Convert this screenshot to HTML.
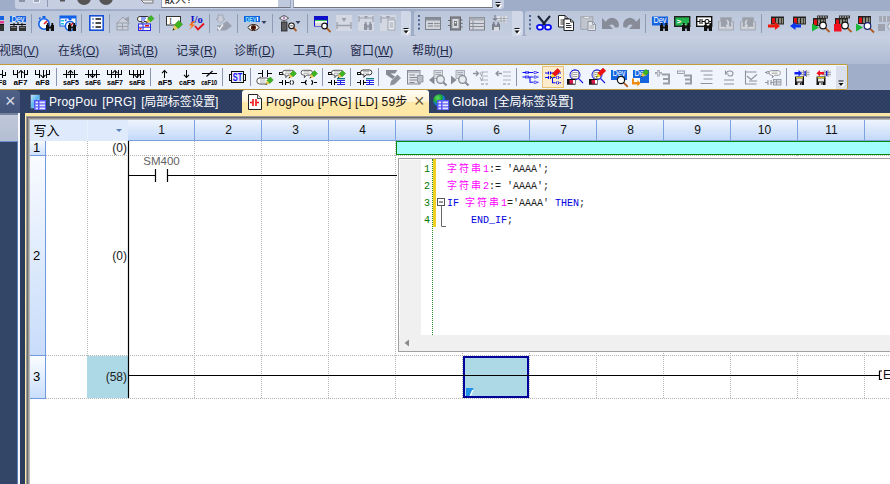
<!DOCTYPE html><html><head><meta charset="utf-8"><title>ProgPou [PRG] [LD] 59步</title><style>
*{box-sizing:border-box;margin:0;padding:0}
html,body{width:890px;height:484px;overflow:hidden;background:#fff}
body{position:relative;font-family:"Liberation Sans","Noto Sans CJK SC",sans-serif;font-size:12px;color:#1e1e1e}
.abs{position:absolute}
#top{position:absolute;left:0;top:0;width:890px;height:90px;background:#a0adc8}
.panel{position:absolute;background:linear-gradient(#bbc6db,#c4cee1);border-radius:3px}
.menu{position:absolute;left:0;top:36px;width:890px;height:28px;background:linear-gradient(#c8d1e3,#afbbd4)}
.menu span{position:absolute;top:5px;font-size:12px;color:#1e2a4c;white-space:nowrap;letter-spacing:0}
.menu u{text-decoration:underline;text-underline-offset:1px}
.sep{position:absolute;width:1px;background:#8d99b3}
.sep2{position:absolute;width:1px;background:#9aa3b5}
#ltb{position:absolute;left:-3px;top:64px;width:851px;height:26px;background:#f0f4fc;border:1px solid #c09c38;border-radius:2px}
#tabs{position:absolute;left:0;top:90px;width:890px;height:26px;background-color:#2c3d5f;background-image:radial-gradient(circle,#31436a .7px,transparent .9px),radial-gradient(circle,#31436a .7px,transparent .9px);background-size:4px 4px;background-position:0 0,2px 2px}
.tab{position:absolute;top:0;height:23px;font-size:12px;letter-spacing:.22px;color:#fff;white-space:nowrap}
.tab span{position:absolute;top:2px;word-spacing:1.5px}.tab span i{font-style:normal;letter-spacing:-.2px}
#main{position:absolute;left:0;top:113px;width:890px;height:371px;background:#2b3c5d}
svg{position:absolute;overflow:visible}
.hdr{position:absolute;top:120px;height:21px;font-size:12px;text-align:center;line-height:21px;color:#111}
.code{position:absolute;font-family:"Liberation Mono","Noto Sans CJK SC",monospace;font-size:10px;line-height:17px;height:17px;white-space:pre;letter-spacing:0}
</style></head><body>
<div id="top">
<div class="panel" style="left:15px;top:-4px;width:489px;height:13px;background:#c6cfe1"></div>
<div class="abs" style="left:161px;top:-2px;width:130px;height:10px;background:#fff;border:1px solid #9aa7c0;border-bottom-color:#70757f"></div>
<div class="abs" style="left:278px;top:-2px;width:12px;height:9px;background:#c3cde2"></div>
<div class="abs" style="left:293px;top:-2px;width:200px;height:10px;background:#fff;border:1px solid #9aa7c0;border-bottom-color:#70757f"></div>
<div class="abs" style="left:164px;top:-10px;font-size:11px;color:#222;height:16px;overflow:hidden">嵌入?</div>
<svg style="left:0px;top:0px" width="890" height="484" viewBox="0 0 890 484"><rect x="19" y="0" width="6" height="2" fill="#8a93a8" /><rect x="33" y="0" width="7" height="3" fill="#e8ecf4" /><rect x="34" y="0" width="5" height="2" fill="#9aa4b8" /><path d="M47.5 0V7" fill="none" stroke="#8e9bb5" stroke-width="1" /><rect x="60" y="0" width="5" height="1.5" fill="#555" /><circle cx="84" cy="-2" r="7" fill="#555"/><circle cx="106" cy="-2" r="7" fill="#555"/><path d="M141 0l3 3h9v-3z" fill="#e8ecf2" stroke="#777" stroke-width="1" /><rect x="279" y="-2" width="11" height="9" fill="#bfcadf" /><path d="M496.5 3.5h5M496.5 5.5h5l-2.5 3z" fill="#fff" stroke="#fff" stroke-width="1" /><path d="M495.5 2.5h5" fill="none" stroke="#111" stroke-width="1" /><path d="M495.5 4.5h5l-2.5 3z" fill="#111" /></svg>
<div class="panel" style="left:-4px;top:11px;width:415px;height:25px"></div>
<div class="panel" style="left:414px;top:11px;width:109px;height:25px"></div>
<div class="panel" style="left:525px;top:11px;width:380px;height:25px"></div>
<div class="abs" style="left:401px;top:11px;width:10px;height:25px;background:#d0d8e8;border-radius:0 3px 3px 0"></div>
<div class="abs" style="left:512px;top:11px;width:11px;height:25px;background:#d0d8e8;border-radius:0 3px 3px 0"></div>
<svg style="left:0px;top:0px" width="890" height="484" viewBox="0 0 890 484"><g transform="translate(-8 15)"><rect x="0" y="1" width="12" height="4" fill="#1464e0" /><rect x="0" y="6" width="12" height="2.5" fill="#e83a8a" /><rect x="2" y="10" width="10" height="6" fill="#333" /><path d="M0 9.5h12" fill="none" stroke="#111" stroke-width="1" /></g><g transform="translate(10 15)"><rect x="0" y="1" width="16" height="6" fill="#1464e0" /><text x="8.0" y="7" font-size="8.5" fill="#fff" font-family="Liberation Sans,sans-serif" text-anchor="middle" textLength="13" lengthAdjust="spacingAndGlyphs">Dev</text><path d="M0 9.5h16M4 8v3M12 8v3M8 7v2.5" fill="none" stroke="#111" stroke-width="1" /><rect x="0" y="11" width="7" height="5" fill="#333" /><rect x="9" y="11" width="7" height="5" fill="#333" /><rect x="1" y="12" width="5" height="1" fill="#777" /><rect x="10" y="12" width="5" height="1" fill="#777" /></g><path d="M31.5 14V33" fill="none" stroke="#8e9bb5" stroke-width="1" /><g transform="translate(38 15)"><circle cx="6" cy="9" r="5.2" fill="#fff" stroke="#1060e8" stroke-width="1.6"/><rect x="4.5" y="1" width="3" height="2" fill="#1060e8" /><path d="M1 4l1.5-1.5" fill="none" stroke="#1060e8" stroke-width="1.5" /><path d="M6 9l3-3" fill="none" stroke="#e81010" stroke-width="1.5" /><g transform="translate(8 8)"><rect x="0" y="2" width="3.2" height="6" fill="#111" /><rect x="4.8" y="2" width="3.2" height="6" fill="#111" /><rect x="0.8" y="0" width="1.8" height="3" fill="#111" /><rect x="5.4" y="0" width="1.8" height="3" fill="#111" /><rect x="3" y="3.5" width="2" height="2" fill="#111" /></g></g><g transform="translate(60 15)"><rect x="0" y="1" width="16" height="10" fill="#fff" stroke="#1060e8" stroke-width="1"/><rect x="0" y="1" width="16" height="2.5" fill="#1060e8" /><rect x="1" y="5" width="3" height="1.5" fill="#18c0e0" /><rect x="1" y="8" width="3" height="1.5" fill="#18c0e0" /><g transform="translate(4 2)"><circle cx="6" cy="9" r="4.6" fill="#fff" stroke="#1060e8" stroke-width="1.6"/><rect x="4.5" y="1" width="3" height="2" fill="#1060e8" /><path d="M1 4l1.5-1.5" fill="none" stroke="#1060e8" stroke-width="1.5" /><path d="M6 9l3-3" fill="none" stroke="#e81010" stroke-width="1.5" /></g><g transform="translate(8 8)"><rect x="0" y="2" width="3.2" height="6" fill="#111" /><rect x="4.8" y="2" width="3.2" height="6" fill="#111" /><rect x="0.8" y="0" width="1.8" height="3" fill="#111" /><rect x="5.4" y="0" width="1.8" height="3" fill="#111" /><rect x="3" y="3.5" width="2" height="2" fill="#111" /></g></g><path d="M81.5 14V33" fill="none" stroke="#8e9bb5" stroke-width="1" /><g transform="translate(89 15)"><rect x="0.8" y="0.8" width="13.4" height="14.4" fill="#fff" stroke="#1450d8" stroke-width="1.6"/><rect x="3" y="3" width="2" height="2" fill="#8aa0d0" /><rect x="3" y="7" width="2" height="2" fill="#8aa0d0" /><rect x="3" y="11" width="2" height="2" fill="#8aa0d0" /><path d="M6.5 4h5.5M6.5 8h5.5M6.5 12h5.5" fill="none" stroke="#111" stroke-width="1.4" /></g><path d="M109.5 14V33" fill="none" stroke="#8e9bb5" stroke-width="1" /><g transform="translate(116 15)"><path d="M1 8l6-6 6 5v2H1z" fill="#c9ced9" stroke="#9aa0ad" stroke-width="1" /><path d="M8 4l5-2.5v6z" fill="#9aa0ad" /><rect x="1" y="8" width="11" height="7" fill="#c9ced9" stroke="#9aa0ad" stroke-width="1"/><path d="M1 11.5h11M6.5 8v7" fill="none" stroke="#9aa0ad" stroke-width="1" /></g><g transform="translate(138 15)"><path d="M2 1.5h7a2 2 0 0 1 0 5H6L4 8.5V6.5H2a2 2 0 0 1 0-5z" fill="#fff" stroke="#333" stroke-width="1" /><path d="M3 3h5M3 5h4" fill="none" stroke="#2040e0" stroke-width="1" /><g transform="translate(8 0.5)"><path d="M5 0l3 3-3.5 3.5-3-3z" fill="#3cb521" stroke="#2a8a10" stroke-width="0.5" /><path d="M1.5 3.5l3 3L0 8z" fill="#e8c850" /><path d="M0 8l.7-1.8 1.1 1.1z" fill="#222" /></g><rect x="0.5" y="9" width="12" height="6.5" fill="#fff" stroke="#2828e8" stroke-width="1"/><path d="M.5 12.2h12M5 9v6.5" fill="none" stroke="#2828e8" stroke-width="1" /><rect x="7" y="10" width="4" height="1.5" fill="#e01010" /><rect x="1.5" y="13" width="2" height="1.5" fill="#e01010" /></g><path d="M159.5 14V33" fill="none" stroke="#8e9bb5" stroke-width="1" /><g transform="translate(166 15)"><rect x="0.5" y="1.5" width="14" height="8.5" fill="#fff" stroke="#333" stroke-width="1"/><text x="4.6" y="8.6" font-size="8" fill="#333" font-family="Liberation Serif,serif" text-anchor="middle">I</text><g transform="translate(6.5 5.5) scale(1.25)"><path d="M5 0l3 3-3.5 3.5-3-3z" fill="#3cb521" stroke="#2a8a10" stroke-width="0.5" /><path d="M1.5 3.5l3 3L0 8z" fill="#e8c850" /><path d="M0 8l.7-1.8 1.1 1.1z" fill="#222" /></g></g><g transform="translate(188 15)"><text x="2.5" y="7.5" font-size="10.5" fill="#1010c8" font-family="Liberation Serif,serif" font-weight="bold">I/o</text><path d="M5 6L1 10.5h3L1 15l6-5.5H4l3-3.5z" fill="#ff6a00" /><path d="M7 11l3 3.5 6-6" fill="none" stroke="#e01020" stroke-width="1.8" /></g><path d="M209.5 14V33" fill="none" stroke="#8e9bb5" stroke-width="1" /><g transform="translate(215 15)"><path d="M3 0h5v4h2L5.5 8 1 4h2z" fill="#c9ced9" stroke="#9aa0ad" stroke-width="0.8" /><path d="M6 10l6-4 5 5-6 4.5H2v-5z" fill="#9aa0ad" /><path d="M2.5 12l2 2.5 3.5-5" fill="none" stroke="#eef0f4" stroke-width="1.5" /></g><path d="M237.5 14V33" fill="none" stroke="#8e9bb5" stroke-width="1" /><g transform="translate(244 15)"><rect x="0" y="1" width="16" height="6" fill="#1464e0" /><text x="7" y="6.6" font-size="6.5" fill="#8fe8ff" font-family="Liberation Sans,sans-serif" text-anchor="middle" font-weight="bold" textLength="11" lengthAdjust="spacingAndGlyphs">DEV</text><rect x="13" y="2" width="1.2" height="4" fill="#fff" /><path d="M4 12.5c2-4 9-4 11 0c-2 4-9 4-11 0z" fill="#fff" stroke="#2a1a10" stroke-width="1" /><circle cx="9.5" cy="12.5" r="2.6" fill="#5a1a08"/><circle cx="9.5" cy="12.5" r="1" fill="#111"/></g><path d="M261.5 21h5l-2.5 3z" fill="#33415e" /><path d="M272.5 14V33" fill="none" stroke="#8e9bb5" stroke-width="1" /><g transform="translate(279 15)"><path d="M5 0v6.5M0 3.2h10" fill="none" stroke="#444" stroke-width="0.8" /><ellipse cx="5" cy="3.2" rx="3.6" ry="2.3" fill="#e8e8ee" stroke="#444" stroke-width=".8"/><rect x="4" y="2.2" width="2" height="2" fill="#a020a0" opacity=".55"/><rect x="2.5" y="7" width="5.5" height="9" fill="#5c5c60" stroke="#222" stroke-width=".8"/><path d="M14.5 13l3 3" fill="none" stroke="#b05a20" stroke-width="1.8" /><circle cx="12.5" cy="10.8" r="2.8" fill="#fff" stroke="#111" stroke-width="1.1"/><path d="M11.2 10.8h2.6" fill="none" stroke="#333" stroke-width="0.8" /></g><path d="M295.5 21h5l-2.5 3z" fill="#33415e" /><path d="M307.5 14V33" fill="none" stroke="#8e9bb5" stroke-width="1" /><g transform="translate(314 15)"><rect x="0" y="1" width="14" height="10.5" fill="#1010c8" /><rect x="1" y="5" width="12" height="6" fill="#d8d8d8" /><rect x="1" y="5" width="12" height="1.2" fill="#38c050" /><rect x="1" y="6.2" width="12" height="1.5" fill="#fff" /><path d="M12.459999999999999 12.959999999999999L16.5 17.0" fill="none" stroke="#b05a20" stroke-width="1.8" /><circle cx="10.5" cy="11" r="2.8" fill="#fff" stroke="#111" stroke-width="1.2"/></g><g transform="translate(336 15)"><rect x="0" y="0" width="16" height="16" fill="#d3d8e3" /><path d="M1 7v7M15 7v7M1 10.5h14" fill="none" stroke="#9aa0ad" stroke-width="1.3" /><path d="M5.5 3h5l-2.5 4z" fill="#9aa0ad" /></g><g transform="translate(358 15)"><rect x="0" y="0" width="16" height="16" fill="#d3d8e3" /><path d="M1 1v6M15 1v6M1 3h14" fill="none" stroke="#9aa0ad" stroke-width="1.2" /><path d="M6 1h4l-2 3z" fill="#9aa0ad" /><g transform="translate(6 7)"><rect x="0" y="2" width="3.2" height="6" fill="#8e94a2" /><rect x="4.8" y="2" width="3.2" height="6" fill="#8e94a2" /><rect x="0.8" y="0" width="1.8" height="3" fill="#8e94a2" /><rect x="5.4" y="0" width="1.8" height="3" fill="#8e94a2" /><rect x="3" y="3.5" width="2" height="2" fill="#8e94a2" /></g></g><g transform="translate(380 15)"><rect x="0" y="0" width="16" height="16" fill="#d3d8e3" /><path d="M1 1v7M1 3h14" fill="none" stroke="#9aa0ad" stroke-width="1.2" /><path d="M6 1h4l-2 3z" fill="#9aa0ad" /><rect x="8" y="5" width="7" height="10" fill="#eceff4" stroke="#9aa0ad" stroke-width="1"/><path d="M9.5 8h4M9.5 10h4M9.5 12h4" fill="none" stroke="#9aa0ad" stroke-width="1" /></g><path d="M404.5 29.5h5M404.5 31.5h5l-2.5 3z" fill="#fff" stroke="#fff" stroke-width="1" /><path d="M403.5 28.5h5" fill="none" stroke="#111" stroke-width="1" /><path d="M403.5 30.5h5l-2.5 3z" fill="#111" /><rect x="418" y="15.0" width="2" height="2" fill="#4a6494" /><rect x="418" y="19.2" width="2" height="2" fill="#4a6494" /><rect x="418" y="23.4" width="2" height="2" fill="#4a6494" /><rect x="418" y="27.6" width="2" height="2" fill="#4a6494" /><g transform="translate(425 15)"><rect x="0.5" y="2.5" width="15" height="12" fill="#cfd3da" stroke="#7d818b" stroke-width="1"/><rect x="0.5" y="2.5" width="15" height="3" fill="#8a8e98" /><path d="M3 8.5h5M3 11h5" fill="none" stroke="#7d818b" stroke-width="1.2" /><path d="M9.5 8.5h5M9.5 11h5" fill="none" stroke="#666" stroke-width="1.2" stroke-dasharray="1.2 .8"/></g><g transform="translate(447 15)"><rect x="3.5" y="2" width="10" height="13" fill="#8a8e98" stroke="#666" stroke-width="1"/><rect x="5.5" y="4" width="6" height="9" fill="#d8dbe2" /><rect x="7" y="6" width="3" height="5" fill="#777" /><rect x="7.8" y="7" width="1.4" height="1.4" fill="#eee" /><path d="M1 5.5h2.5M1 10.5h2.5M13.5 5h2M13.5 8.5h2M13.5 12h2" fill="none" stroke="#666" stroke-width="1" /></g><g transform="translate(469 15)"><rect x="0.5" y="2.5" width="15" height="12.5" fill="#d4d7de" stroke="#7d818b" stroke-width="1"/><rect x="0.5" y="2.5" width="15" height="3" fill="#a9adb6" /><path d="M.5 8.5h15M.5 11.5h15M4 5.5v9.5" fill="none" stroke="#8a8e98" stroke-width="1" /></g><g transform="translate(491 15)"><rect x="6" y="1" width="10" height="7" fill="#dde0e6" /><path d="M6 3.5h10M6 6h10M10 1v7M13 1v7" fill="none" stroke="#9a9ea8" stroke-width="0.8" /><path d="M4 0v5l-2-1.5M4 5l2-1.5" fill="none" stroke="#7d818b" stroke-width="1.2" /><g transform="translate(1 7)"><rect x="0" y="2" width="3.2" height="6" fill="#7d818b" /><rect x="4.8" y="2" width="3.2" height="6" fill="#7d818b" /><rect x="0.8" y="0" width="1.8" height="3" fill="#7d818b" /><rect x="5.4" y="0" width="1.8" height="3" fill="#7d818b" /><rect x="3" y="3.5" width="2" height="2" fill="#7d818b" /></g><rect x="3" y="12" width="5" height="4" fill="#d8dbe2" /></g><path d="M515.5 29.5h5M515.5 31.5h5l-2.5 3z" fill="#fff" stroke="#fff" stroke-width="1" /><path d="M514.5 28.5h5" fill="none" stroke="#111" stroke-width="1" /><path d="M514.5 30.5h5l-2.5 3z" fill="#111" /><rect x="529" y="15.0" width="2" height="2" fill="#4a6494" /><rect x="529" y="19.2" width="2" height="2" fill="#4a6494" /><rect x="529" y="23.4" width="2" height="2" fill="#4a6494" /><rect x="529" y="27.6" width="2" height="2" fill="#4a6494" /><g transform="translate(536 15)"><path d="M2 1l7.5 9M14 1L6.5 10" fill="none" stroke="#1a2438" stroke-width="2" /><ellipse cx="4" cy="12.3" rx="3" ry="2.4" fill="#fff" stroke="#0a0af0" stroke-width="1.8"/><ellipse cx="12" cy="12.3" rx="3" ry="2.4" fill="#fff" stroke="#0a0af0" stroke-width="1.8"/></g><g transform="translate(558 15)"><path d="M0.5 0.5h6.5l3 3v8.5h-9.5z" fill="#fff" stroke="#222" stroke-width="1" /><path d="M7.0 0.5v3h3" fill="none" stroke="#222" stroke-width="0.9" /><path d="M2.5 5.0h4M2.5 7.0h5.5M2.5 9.0h5.5" fill="none" stroke="#333" stroke-width="1" /><path d="M6 4h6.5l3 3v8.5h-9.5z" fill="#fff" stroke="#222" stroke-width="1" /><path d="M12.5 4v3h3" fill="none" stroke="#222" stroke-width="0.9" /><path d="M8 8.5h4M8 10.5h5.5M8 12.5h5.5" fill="none" stroke="#333" stroke-width="1" /></g><g transform="translate(580 15)"><rect x="0.8" y="1.8" width="12" height="12.5" fill="#c0c4cd" stroke="#a0a5af" stroke-width="1"/><rect x="4" y="1.5" width="5.5" height="2" fill="#eceef2" stroke="#a0a5af" stroke-width=".7"/><path d="M8 6.5h4.5l3 3v6h-7.5z" fill="#e6e8ec" stroke="#8d929c" stroke-width="1" /><path d="M12.5 6.5v3h3" fill="none" stroke="#8d929c" stroke-width="0.8" /><path d="M9.5 11h4.5M9.5 13h4.5" fill="none" stroke="#a0a5af" stroke-width="1" /></g><path d="M602 18V29H613L609.3 25.3A3.3 3.3 0 0 1 614.8 27.5H618.3A6.8 6.8 0 0 0 605.8 21.8Z" fill="#878c98" /><path d="M640 18V29H629L632.7 25.3A3.3 3.3 0 0 0 627.2 27.5H623.7A6.8 6.8 0 0 1 636.2 21.8Z" fill="#878c98" /><path d="M645.5 14V33" fill="none" stroke="#8e9bb5" stroke-width="1" /><g transform="translate(652 15)"><rect x="0" y="1.5" width="16" height="9" fill="#1464e0" /><text x="8.0" y="7.5" font-size="8.5" fill="#fff" font-family="Liberation Sans,sans-serif" text-anchor="middle" textLength="13" lengthAdjust="spacingAndGlyphs">Dev</text><g transform="translate(8 8)"><rect x="0" y="2" width="3.2" height="6" fill="#111" /><rect x="4.8" y="2" width="3.2" height="6" fill="#111" /><rect x="0.8" y="0" width="1.8" height="3" fill="#111" /><rect x="5.4" y="0" width="1.8" height="3" fill="#111" /><rect x="3" y="3.5" width="2" height="2" fill="#111" /></g></g><g transform="translate(674 15)"><rect x="0.7" y="1.7" width="15" height="9.6" fill="#22b14c" stroke="#222" stroke-width="1.4"/><text x="2.5" y="9.2" font-size="8" fill="#fff" font-family="Liberation Mono,monospace" font-weight="bold">&gt;_</text><g transform="translate(8 8)"><rect x="0" y="2" width="3.2" height="6" fill="#111" /><rect x="4.8" y="2" width="3.2" height="6" fill="#111" /><rect x="0.8" y="0" width="1.8" height="3" fill="#111" /><rect x="5.4" y="0" width="1.8" height="3" fill="#111" /><rect x="3" y="3.5" width="2" height="2" fill="#111" /></g></g><g transform="translate(696 15)"><rect x="0.7" y="1.7" width="15" height="9.6" fill="#fff" stroke="#111" stroke-width="1.4"/><path d="M1 6.5h3M4 4v5M6 4v5M6 6.5h3M13 6.5h2" fill="none" stroke="#111" stroke-width="1.1" /><circle cx="11" cy="6.5" r="2" fill="none" stroke="#111" stroke-width="1.1"/><g transform="translate(8 8)"><rect x="0" y="2" width="3.2" height="6" fill="#111" /><rect x="4.8" y="2" width="3.2" height="6" fill="#111" /><rect x="0.8" y="0" width="1.8" height="3" fill="#111" /><rect x="5.4" y="0" width="1.8" height="3" fill="#111" /><rect x="3" y="3.5" width="2" height="2" fill="#111" /></g></g><g transform="translate(718 15)"><path d="M.5 6.5h2v-4h11v4h2v8.5h-15z" fill="#c4c8d0" stroke="#a6abb5" stroke-width="1" /><rect x="3" y="3" width="10" height="9" fill="#9a9fa9" /><path d="M8 4.5c3 .5 4 3 2.5 6l1.8.3-3.3 2.2-1.2-3.6 1.4.5c.8-2 0-3.5-1.2-5.4z" fill="#d4d7de" /><path d="M2 12.5h5M9 12.5h5" fill="none" stroke="#d4d7de" stroke-width="1.5" /></g><g transform="translate(740 15)"><path d="M.5 6.5h2v-4h11v4h2v8.5h-15z" fill="#c4c8d0" stroke="#a6abb5" stroke-width="1" /><rect x="3" y="3" width="10" height="9" fill="#9a9fa9" /><path d="M8 4.5c-3 .5-4 3-2.5 6l-1.8.3 3.3 2.2 1.2-3.6-1.4.5c-.8-2 0-3.5 1.2-5.4z" fill="#d4d7de" /><path d="M2 12.5h5M9 12.5h5" fill="none" stroke="#d4d7de" stroke-width="1.5" /></g><path d="M761.5 14V33" fill="none" stroke="#8e9bb5" stroke-width="1" /><g transform="translate(768 15)"><rect x="3" y="1.5" width="13" height="8" fill="#222" /><rect x="4" y="3.0" width="3" height="5.5" fill="#e01010" /><rect x="8" y="3.0" width="2" height="5.5" fill="#8a8a7a" /><rect x="11" y="3.0" width="2" height="5.5" fill="#8a8a7a" /><rect x="13.7" y="3.0" width="1.5" height="5.5" fill="#8a8a7a" /><path d="M0 9.5h7V7l5 4-5 4v-2.5H0z" fill="#f01808" /></g><g transform="translate(790 15)"><rect x="3" y="1.5" width="13" height="8" fill="#222" /><rect x="4" y="3.0" width="3" height="5.5" fill="#e01010" /><rect x="8" y="3.0" width="2" height="5.5" fill="#8a8a7a" /><rect x="11" y="3.0" width="2" height="5.5" fill="#8a8a7a" /><rect x="13.7" y="3.0" width="1.5" height="5.5" fill="#8a8a7a" /><path d="M11 9.5H5.5V7L0 11l5.5 4v-2.5H11z" fill="#0838f0" /></g><g transform="translate(812 15)"><rect x="5" y="0.5" width="11" height="3" fill="#333" /><path d="M6.5 1v2M9 1v2M11.5 1v2M14 1v2" fill="none" stroke="#999" stroke-width="1.2" /><rect x="1" y="3" width="13" height="8" fill="#222" /><rect x="2" y="4.5" width="3" height="5.5" fill="#e01010" /><rect x="6" y="4.5" width="2" height="5.5" fill="#8a8a7a" /><rect x="9" y="4.5" width="2" height="5.5" fill="#8a8a7a" /><rect x="11.7" y="4.5" width="1.5" height="5.5" fill="#8a8a7a" /><path d="M0 8.5v8l7-4z" fill="#18b838" /><path d="M13.309999999999999 12.809999999999999L17.5 17.0" fill="none" stroke="#b05a20" stroke-width="1.8" /><circle cx="11" cy="10.5" r="3.3" fill="#fff" stroke="#111" stroke-width="1.2"/></g><g transform="translate(834 15)"><rect x="5" y="0.5" width="11" height="3" fill="#333" /><path d="M6.5 1v2M9 1v2M11.5 1v2M14 1v2" fill="none" stroke="#999" stroke-width="1.2" /><rect x="1" y="3" width="13" height="8" fill="#222" /><rect x="2" y="4.5" width="3" height="5.5" fill="#e01010" /><rect x="6" y="4.5" width="2" height="5.5" fill="#8a8a7a" /><rect x="9" y="4.5" width="2" height="5.5" fill="#8a8a7a" /><rect x="11.7" y="4.5" width="1.5" height="5.5" fill="#8a8a7a" /><rect x="0" y="9" width="7.5" height="7.5" fill="#f01020" /><path d="M13.309999999999999 12.809999999999999L17.5 17.0" fill="none" stroke="#b05a20" stroke-width="1.8" /><circle cx="11" cy="10.5" r="3.3" fill="#fff" stroke="#111" stroke-width="1.2"/></g><g transform="translate(856 15)"><rect x="2" y="1" width="13" height="8" fill="#222" /><rect x="3" y="2.5" width="3" height="5.5" fill="#e01010" /><rect x="7" y="2.5" width="2" height="5.5" fill="#8a8a7a" /><rect x="10" y="2.5" width="2" height="5.5" fill="#8a8a7a" /><rect x="12.7" y="2.5" width="1.5" height="5.5" fill="#8a8a7a" /><path d="M0 8.5v8l7-4z" fill="#18b838" /><path d="M13.809999999999999 13.309999999999999L18.0 17.5" fill="none" stroke="#b05a20" stroke-width="1.8" /><circle cx="11.5" cy="11" r="3.3" fill="#fff" stroke="#1a2470" stroke-width="1.2"/></g><g transform="translate(878 15)"><rect x="1" y="1" width="12" height="6" fill="#a4a9b5" /><path d="M4.5 1v6M8.5 1v6" fill="none" stroke="#c8ccd6" stroke-width="1" /><rect x="0" y="9" width="7" height="7" fill="#9da2ae" /><circle cx="13" cy="11.5" r="3.3" fill="#d8dbe3" stroke="#9aa0ad" stroke-width="1"/></g></svg>
<div class="menu">
<span style="left:-1px">视图(<u>V</u>)</span>
<span style="left:58px">在线(<u>O</u>)</span>
<span style="left:118px">调试(<u>B</u>)</span>
<span style="left:176px">记录(<u>R</u>)</span>
<span style="left:234px">诊断(<u>D</u>)</span>
<span style="left:293px">工具(<u>T</u>)</span>
<span style="left:350px">窗口(<u>W</u>)</span>
<span style="left:412px">帮助(<u>H</u>)</span>
</div>
<div class="abs" style="left:848px;top:64px;width:42px;height:26px;background:#a1aec9"></div>
<div id="ltb"></div>
<svg style="left:0px;top:0px" width="890" height="484" viewBox="0 0 890 484"><path d="M-2 74.5h4M2.5 70v8M5.5 72v3h-3" fill="none" stroke="#000" stroke-width="1" shape-rendering="crispEdges"/><text x="0" y="85.4" font-size="8" font-weight="bold" fill="#000" font-family="Liberation Sans,sans-serif" text-anchor="middle" textLength="13" lengthAdjust="spacingAndGlyphs">sF8</text><path d="M13.5 70v4.5h4M17.5 70v8M24.5 70v8M24.5 74.5h3v-4.5" fill="none" stroke="#000" stroke-width="1" shape-rendering="crispEdges"/><path d="M21 78v-7.5" fill="none" stroke="#000" stroke-width="1" shape-rendering="crispEdges"/><path d="M18.5 73.2l2.5-2.7 2.5 2.7" fill="none" stroke="#000" stroke-width="1.1" /><text x="20.5" y="85.4" font-size="8" font-weight="bold" fill="#000" font-family="Liberation Sans,sans-serif" text-anchor="middle" textLength="14" lengthAdjust="spacingAndGlyphs">aF7</text><path d="M35.5 70v4.5h4M39.5 70v8M46.5 70v8M46.5 74.5h3v-4.5" fill="none" stroke="#000" stroke-width="1" shape-rendering="crispEdges"/><path d="M43 70v7.5" fill="none" stroke="#000" stroke-width="1" shape-rendering="crispEdges"/><path d="M40.5 74.8l2.5 2.7 2.5-2.7" fill="none" stroke="#000" stroke-width="1.1" /><text x="42.5" y="85.4" font-size="8" font-weight="bold" fill="#000" font-family="Liberation Sans,sans-serif" text-anchor="middle" textLength="14" lengthAdjust="spacingAndGlyphs">aF8</text><path d="M56.5 68V86" fill="none" stroke="#8a96b0" stroke-width="1" /><path d="M63 74.5h15M66.5 70v8M74.5 70v8" fill="none" stroke="#000" stroke-width="1" shape-rendering="crispEdges"/><path d="M70.5 78v-7.5" fill="none" stroke="#000" stroke-width="1" shape-rendering="crispEdges"/><path d="M68.0 73.2l2.5-2.7 2.5 2.7" fill="none" stroke="#000" stroke-width="1.1" /><text x="71" y="85.4" font-size="8" font-weight="bold" fill="#000" font-family="Liberation Sans,sans-serif" text-anchor="middle" textLength="16" lengthAdjust="spacingAndGlyphs">saF5</text><path d="M85 74.5h15M88.5 70v8M96.5 70v8" fill="none" stroke="#000" stroke-width="1" shape-rendering="crispEdges"/><path d="M92.5 70v7.5" fill="none" stroke="#000" stroke-width="1" shape-rendering="crispEdges"/><path d="M90.0 74.8l2.5 2.7 2.5-2.7" fill="none" stroke="#000" stroke-width="1.1" /><text x="93" y="85.4" font-size="8" font-weight="bold" fill="#000" font-family="Liberation Sans,sans-serif" text-anchor="middle" textLength="16" lengthAdjust="spacingAndGlyphs">saF6</text><path d="M107.5 70v4.5h4M111.5 70v8M118.5 70v8M118.5 74.5h3v-4.5" fill="none" stroke="#000" stroke-width="1" shape-rendering="crispEdges"/><path d="M115 78v-7.5" fill="none" stroke="#000" stroke-width="1" shape-rendering="crispEdges"/><path d="M112.5 73.2l2.5-2.7 2.5 2.7" fill="none" stroke="#000" stroke-width="1.1" /><path d="M112 74.5h6" fill="none" stroke="#000" stroke-width="1" shape-rendering="crispEdges"/><text x="115" y="85.4" font-size="8" font-weight="bold" fill="#000" font-family="Liberation Sans,sans-serif" text-anchor="middle" textLength="16" lengthAdjust="spacingAndGlyphs">saF7</text><path d="M129.5 70v4.5h4M133.5 70v8M140.5 70v8M140.5 74.5h3v-4.5" fill="none" stroke="#000" stroke-width="1" shape-rendering="crispEdges"/><path d="M137 70v7.5" fill="none" stroke="#000" stroke-width="1" shape-rendering="crispEdges"/><path d="M134.5 74.8l2.5 2.7 2.5-2.7" fill="none" stroke="#000" stroke-width="1.1" /><path d="M134 74.5h6" fill="none" stroke="#000" stroke-width="1" shape-rendering="crispEdges"/><text x="137" y="85.4" font-size="8" font-weight="bold" fill="#000" font-family="Liberation Sans,sans-serif" text-anchor="middle" textLength="16" lengthAdjust="spacingAndGlyphs">saF8</text><path d="M150.5 68V86" fill="none" stroke="#8a96b0" stroke-width="1" /><path d="M164.5 78v-7.5" fill="none" stroke="#000" stroke-width="1" shape-rendering="crispEdges"/><path d="M162.0 73.2l2.5-2.7 2.5 2.7" fill="none" stroke="#000" stroke-width="1.1" /><text x="165" y="85.4" font-size="8" font-weight="bold" fill="#000" font-family="Liberation Sans,sans-serif" text-anchor="middle" textLength="14" lengthAdjust="spacingAndGlyphs">aF5</text><path d="M186.5 70v7.5" fill="none" stroke="#000" stroke-width="1" shape-rendering="crispEdges"/><path d="M184.0 74.8l2.5 2.7 2.5-2.7" fill="none" stroke="#000" stroke-width="1.1" /><text x="187" y="85.4" font-size="8" font-weight="bold" fill="#000" font-family="Liberation Sans,sans-serif" text-anchor="middle" textLength="16" lengthAdjust="spacingAndGlyphs">caF5</text><path d="M201.5 73.5h15.5" fill="none" stroke="#000" stroke-width="1" shape-rendering="crispEdges"/><path d="M206.5 76.5l6-5.5" fill="none" stroke="#000" stroke-width="1.1" /><text x="209.2" y="85.4" font-size="8" font-weight="bold" fill="#000" font-family="Liberation Sans,sans-serif" text-anchor="middle" textLength="16" lengthAdjust="spacingAndGlyphs">caF10</text><path d="M222.5 68V86" fill="none" stroke="#8a96b0" stroke-width="1" /><rect x="231.5" y="71.5" width="12" height="11" fill="#e9e9f1" stroke="#111" stroke-width="1" shape-rendering="crispEdges"/><path d="M231.5 74.5h-2v6h2M243.5 74.5h2v6h-2" fill="none" stroke="#111" stroke-width="1" shape-rendering="crispEdges"/><text x="237.6" y="81.3" font-size="10.5" fill="#1818ff" font-weight="bold" font-family="Liberation Sans,sans-serif" text-anchor="middle" textLength="9.5" lengthAdjust="spacingAndGlyphs">ST</text><path d="M250.5 68V86" fill="none" stroke="#8a96b0" stroke-width="1" /><path d="M258 73.5h4M262.5 70v7M267.5 70v7M268 73.5h4" fill="none" stroke="#000" stroke-width="1" shape-rendering="crispEdges"/><path d="M259.5 78a2 2 0 0 1 1.5-1M259.8 78h6.7a2 2 0 0 1 0 6h-6.7a3 3 0 0 1 0-6z" fill="#fff" stroke="#444" stroke-width="0.9" /><path d="M260 80h5.5M260 82h5.5" fill="none" stroke="#999" stroke-width="0.7" /><g transform="translate(265.3 77)"><path d="M5 0l3 3-3.5 3.5-3-3z" fill="#3cb521" stroke="#2a8a10" stroke-width="0.5" /><path d="M1.5 3.5l3 3L0 8z" fill="#e8c850" /><path d="M0 8l.7-1.8 1.1 1.1z" fill="#222" /></g><rect x="279.5" y="72.5" width="3" height="2" fill="#fff" stroke="#111" stroke-width="1" shape-rendering="crispEdges"/><path d="M285.0 70.3h6.5a2.4 2.4 0 0 1 0 4.8h-3.5l-2.2 2.6.3-2.6h-1.1a2.4 2.4 0 0 1 0-4.8z" fill="#fff" stroke="#444" stroke-width="0.9" /><path d="M285.0 71.8h6.5M285.0 73.39999999999999h6" fill="none" stroke="#999" stroke-width="0.7" /><g transform="translate(288.5 70.5)"><path d="M5 0l3 3-3.5 3.5-3-3z" fill="#3cb521" stroke="#2a8a10" stroke-width="0.5" /><path d="M1.5 3.5l3 3L0 8z" fill="#e8c850" /><path d="M0 8l.7-1.8 1.1 1.1z" fill="#222" /></g><path d="M279 82.5h3M282.5 80v5M285.5 80v5M286 82.5h3" fill="none" stroke="#000" stroke-width="1" shape-rendering="crispEdges"/><path d="M290.8 80.3q-1.8 2.2 0 4.4M292.7 80.3q1.8 2.2 0 4.4" fill="none" stroke="#000" stroke-width="1" /><path d="M303.5 70.3h6.5a2.4 2.4 0 0 1 0 4.8h-3.5l-2.2 2.6.3-2.6h-1.1a2.4 2.4 0 0 1 0-4.8z" fill="#fff" stroke="#444" stroke-width="0.9" /><path d="M303.5 71.8h6.5M303.5 73.39999999999999h6" fill="none" stroke="#999" stroke-width="0.7" /><g transform="translate(309.5 70.5)"><path d="M5 0l3 3-3.5 3.5-3-3z" fill="#3cb521" stroke="#2a8a10" stroke-width="0.5" /><path d="M1.5 3.5l3 3L0 8z" fill="#e8c850" /><path d="M0 8l.7-1.8 1.1 1.1z" fill="#222" /></g><path d="M301 82.5h3.5M313.5 82.5h3.5" fill="none" stroke="#000" stroke-width="1" shape-rendering="crispEdges"/><path d="M306.5 80.3q-2.4 2.2 0 4.4M311.5 80.3q2.4 2.2 0 4.4" fill="none" stroke="#000" stroke-width="1.2" /><path d="M322.5 68V86" fill="none" stroke="#8a96b0" stroke-width="1" /><rect x="328.5" y="72.5" width="3" height="2" fill="#fff" stroke="#111" stroke-width="1" shape-rendering="crispEdges"/><path d="M334.0 70.3h6.5a2.4 2.4 0 0 1 0 4.8h-3.5l-2.2 2.6.3-2.6h-1.1a2.4 2.4 0 0 1 0-4.8z" fill="#fff" stroke="#444" stroke-width="0.9" /><path d="M334.0 71.8h6.5M334.0 73.39999999999999h6" fill="none" stroke="#999" stroke-width="0.7" /><g transform="translate(337.5 70.5)"><path d="M5 0l3 3-3.5 3.5-3-3z" fill="#3cb521" stroke="#2a8a10" stroke-width="0.5" /><path d="M1.5 3.5l3 3L0 8z" fill="#e8c850" /><path d="M0 8l.7-1.8 1.1 1.1z" fill="#222" /></g><path d="M328 82.5h3M331.5 80v5M334.5 80v5M335 82.5h2" fill="none" stroke="#000" stroke-width="1" shape-rendering="crispEdges"/><rect x="337" y="78" width="8" height="1.6" fill="#0a7a8a" /><rect x="337" y="79.6" width="8" height="5" fill="#fff" /><path d="M337 80.5h8M337 82.5h8M337 84.5h8M340.5 80v5" fill="none" stroke="#2828e8" stroke-width="1" shape-rendering="crispEdges"/><path d="M350.5 68V86" fill="none" stroke="#8a96b0" stroke-width="1" /><rect x="357.5" y="72.0" width="3" height="2" fill="#fff" stroke="#111" stroke-width="1" shape-rendering="crispEdges"/><path d="M363.0 70.0h6.5a2.4 2.4 0 0 1 0 4.8h-3.5l-2.2 2.6.3-2.6h-1.1a2.4 2.4 0 0 1 0-4.8z" fill="#fff" stroke="#222" stroke-width="0.9" /><path d="M363.0 71.5h6.5M363.0 73.1h6" fill="none" stroke="#999" stroke-width="0.7" /><path d="M357 82.5h3M360.5 80v5M363.5 80v5M364 82.5h2" fill="none" stroke="#000" stroke-width="1" shape-rendering="crispEdges"/><rect x="366" y="78" width="8" height="1.6" fill="#0a7a8a" /><rect x="366" y="79.6" width="8" height="5" fill="#fff" /><path d="M366 80.5h8M366 82.5h8M366 84.5h8M369.5 80v5" fill="none" stroke="#2828e8" stroke-width="1" shape-rendering="crispEdges"/><path d="M378.5 68V86" fill="none" stroke="#8a96b0" stroke-width="1" /><path d="M386 70h11.5l-2.5 3.5h-4.5l4.5 3-2.5 2.5-6.5-4.5z" fill="#858a95" /><path d="M397.5 74.5l3.5 3.5-6.5 6.5-4.5 1 1-4.5z" fill="#8d929d" /><rect x="407.5" y="70.5" width="12.5" height="13.5" fill="#e2e4e9" stroke="#858a95" stroke-width="1"/><rect x="408" y="71" width="11.5" height="2" fill="#b8bcc5" /><path d="M409.5 75h5.5M409.5 77.5h7.5M409.5 80h7.5M409.5 82.5h5" fill="none" stroke="#858a95" stroke-width="1.1" /><path d="M417.5 75.5h5.5v6.5h-2.5l-2 2v-2h-1z" fill="#b9bdc6" stroke="#858a95" stroke-width="0.8" /><path d="M429 80l5.5-4.5v9z" fill="#858a95" /><rect x="434" y="70.5" width="8.5" height="8" fill="#d9dce2" stroke="#9a9ea9" stroke-width=".8"/><path d="M435.5 72.5h5.5M435.5 74.5h5.5" fill="none" stroke="#9a9ea9" stroke-width="0.8" /><path d="M443.5 82.5l3 3" fill="none" stroke="#858a95" stroke-width="2" /><circle cx="440.5" cy="79.5" r="3.8" fill="#e9ebef" stroke="#858a95" stroke-width="1.3"/><path d="M451 75.5v9l5.5-4.5z" fill="#858a95" /><rect x="456" y="70.5" width="8.5" height="8" fill="#d9dce2" stroke="#9a9ea9" stroke-width=".8"/><path d="M457.5 72.5h5.5M457.5 74.5h5.5" fill="none" stroke="#9a9ea9" stroke-width="0.8" /><path d="M465.5 82.5l3 3" fill="none" stroke="#858a95" stroke-width="2" /><circle cx="462.5" cy="79.5" r="3.8" fill="#e9ebef" stroke="#858a95" stroke-width="1.3"/><path d="M473 73.5h5M476 71l2.5 2.5-2.5 2.5" fill="none" stroke="#8d929e" stroke-width="1.3" /><path d="M481 72h7M481 76h7M481 80h7" fill="none" stroke="#c4c7cf" stroke-width="1.4" /><path d="M480 72l1.5 4 1.5-4M480 77l1.5 4 1.5-4" fill="none" stroke="#8d929e" stroke-width="0.7" /><path d="M481 84h3M485.5 84h2.5" fill="none" stroke="#8d929e" stroke-width="1" /><path d="M496 73.5h6M498.5 71l-2.5 2.5 2.5 2.5" fill="none" stroke="#8d929e" stroke-width="1.3" /><path d="M503 72h8M503 76h8M503 80h8" fill="none" stroke="#c4c7cf" stroke-width="1.4" /><path d="M503 84h3M507.5 84h2.5" fill="none" stroke="#8d929e" stroke-width="1" /><path d="M516.5 68V86" fill="none" stroke="#8a96b0" stroke-width="1" /><path d="M522.5 72.5h3M526.0 71.0v3M528.0 71.0v3M528.0 72.5h5M537.0 72.5h1.5" fill="none" stroke="#0a0af0" stroke-width="1.1" /><path d="M534.5 71.0q-1.2 1.5 0 3M535.7 71.0q1.2 1.5 0 3" fill="none" stroke="#0a0af0" stroke-width="0.9" /><path d="M522.5 77h3M526.0 75.5v3M528.0 75.5v3M528.0 77h5M537.0 77h1.5" fill="none" stroke="#0a0af0" stroke-width="1.1" /><path d="M534.5 75.5q-1.2 1.5 0 3M535.7 75.5q1.2 1.5 0 3" fill="none" stroke="#0a0af0" stroke-width="0.9" /><path d="M530.0 77v5.3h3M537.0 82.3h1.5" fill="none" stroke="#0a0af0" stroke-width="1.1" /><path d="M534.5 80.8q-1.2 1.5 0 3M535.7 80.8q1.2 1.5 0 3" fill="none" stroke="#0a0af0" stroke-width="0.9" /><rect x="542.5" y="66.5" width="21" height="21" fill="#fdeccb" stroke="#e6c27a" stroke-width="1"/><path d="M545 73.0h3M548.5 71.5v3M550.5 71.5v3M550.5 73.0h5M559.5 73.0h1.5" fill="none" stroke="#0a0af0" stroke-width="1.1" /><path d="M557 71.5q-1.2 1.5 0 3M558.2 71.5q1.2 1.5 0 3" fill="none" stroke="#0a0af0" stroke-width="0.9" /><path d="M545 77.5h3M548.5 76.0v3M550.5 76.0v3M550.5 77.5h5M559.5 77.5h1.5" fill="none" stroke="#0a0af0" stroke-width="1.1" /><path d="M557 76.0q-1.2 1.5 0 3M558.2 76.0q1.2 1.5 0 3" fill="none" stroke="#0a0af0" stroke-width="0.9" /><path d="M552.5 77.5v5.3h3M559.5 82.8h1.5" fill="none" stroke="#0a0af0" stroke-width="1.1" /><path d="M557 81.3q-1.2 1.5 0 3M558.2 81.3q1.2 1.5 0 3" fill="none" stroke="#0a0af0" stroke-width="0.9" /><g transform="translate(550.5 68.5)"><path d="M7 0l2.8 2.8-5.3 5.3L1.7 5.3z" fill="#f01010" stroke="#c00808" stroke-width="0.5" /><path d="M1.7 5.3l2.8 2.8L0 9.8z" fill="#f0e020" /><path d="M0 9.8l.7-1.8 1.1 1.1z" fill="#222" /></g><rect x="572" y="70.5" width="6.5" height="8" fill="#fff" stroke="#666" stroke-width=".7"/><path d="M573 72.5h4.5M573 74.5h4.5M573 76.5h4.5" fill="none" stroke="#888" stroke-width="0.8" /><circle cx="575" cy="74.8" r="5" fill="none" stroke="#1818f0" stroke-width="1"/><path d="M578.5 78.5l4.5 4.5" fill="none" stroke="#1818f0" stroke-width="1.1" /><rect x="567" y="79" width="8.5" height="5.7" fill="#111" /><rect x="569.5" y="80" width="3.5" height="3.7" fill="#d81848" /><rect x="573" y="80" width="2" height="3.7" fill="#fff" /><rect x="594" y="70.5" width="6.5" height="8" fill="#fff" stroke="#666" stroke-width=".7"/><path d="M595 72.5h4.5M595 74.5h4.5M595 76.5h4.5" fill="none" stroke="#888" stroke-width="0.8" /><circle cx="597" cy="74.8" r="5" fill="none" stroke="#1818f0" stroke-width="1"/><path d="M600.5 78.5l4.5 4.5" fill="none" stroke="#1818f0" stroke-width="1.1" /><rect x="589" y="79" width="8.5" height="5.7" fill="#111" /><rect x="591.5" y="80" width="3.5" height="3.7" fill="#d81848" /><rect x="595" y="80" width="2" height="3.7" fill="#fff" /><g transform="translate(596 68)"><path d="M7 0l2.8 2.8-5.3 5.3L1.7 5.3z" fill="#f01010" stroke="#c00808" stroke-width="0.5" /><path d="M1.7 5.3l2.8 2.8L0 9.8z" fill="#f0e020" /><path d="M0 9.8l.7-1.8 1.1 1.1z" fill="#222" /></g><rect x="611" y="70" width="16" height="10" fill="#1464e0" /><text x="619.0" y="76" font-size="8.5" fill="#fff" font-family="Liberation Sans,sans-serif" text-anchor="middle" textLength="13" lengthAdjust="spacingAndGlyphs">Dev</text><path d="M623.52 82.52L627.8000000000001 86.8" fill="none" stroke="#b05a20" stroke-width="1.8" /><circle cx="621" cy="80" r="3.6" fill="#fff" stroke="#111" stroke-width="1.2"/><rect x="633" y="70" width="16" height="13" fill="#1464e0" /><text x="641.0" y="76" font-size="8.5" fill="#fff" font-family="Liberation Sans,sans-serif" text-anchor="middle" textLength="13" lengthAdjust="spacingAndGlyphs">Dev</text><rect x="633" y="78" width="7" height="6" fill="#fcfcfd" /><path d="M634 78.5v3.5h3.5v-2l3 3.2-3 3.2v-2h-5.5v-6z" fill="#f08a10" /><g transform="translate(641 69.3)"><path d="M5 0l3 3-3.5 3.5-3-3z" fill="#3cb521" stroke="#2a8a10" stroke-width="0.5" /><path d="M1.5 3.5l3 3L0 8z" fill="#e8c850" /><path d="M0 8l.7-1.8 1.1 1.1z" fill="#222" /></g><path d="M658.5 70v6.5M655.2 73.2h6.5" fill="none" stroke="#8d929e" stroke-width="2.2" /><path d="M658.5 70.8v5M656 73.2h5" fill="none" stroke="#e8eaee" stroke-width="0.8" /><path d="M662 74.5h8M669 74v10.5M663 79h6M663 83.5h6" fill="none" stroke="#9a9ea9" stroke-width="2" /><rect x="677.5" y="71" width="7" height="2.4" fill="#e8eaee" stroke="#8d929e" stroke-width=".8"/><path d="M684 75.5h8M691 75v9.5M685 79.5h6M685 83.5h6" fill="none" stroke="#9a9ea9" stroke-width="2" /><path d="M700.5 71h12M703.5 75h9M703.5 79h9M700.5 83.5h12" fill="none" stroke="#8d929e" stroke-width="1.1" /><path d="M726 73c2-3 7-2.5 7 .5s-4 3-5 1.5M725.5 70.5v3.5h3" fill="none" stroke="#8d929e" stroke-width="1.1" /><path d="M724 80h10M724 84h10" fill="none" stroke="#8d929e" stroke-width="1.1" /><path d="M745.5 70.5v14M745.5 72h11M745.5 84h11" fill="none" stroke="#8d929e" stroke-width="1.1" /><path d="M747 76l4 3.5 6-5M749 81h8" fill="none" stroke="#8d929e" stroke-width="1.1" /><path d="M765 72.5h2.5" fill="none" stroke="#8d929e" stroke-width="1.1" /><rect x="767" y="71.5" width="2" height="2" fill="#fff" stroke="#8d929e" stroke-width=".8"/><path d="M771.5 70.5h6.5a2.4 2.4 0 0 1 0 4.8h-3.5l-2.2 2.6.3-2.6h-1.1a2.4 2.4 0 0 1 0-4.8z" fill="#fff" stroke="#8d929e" stroke-width="0.9" /><path d="M771.5 72h6.5M771.5 73.6h6" fill="none" stroke="#999" stroke-width="0.7" /><path d="M765 82.5h3M768 80v5M771 80v5M771 82.5h2" fill="none" stroke="#8d929e" stroke-width="1.1" /><rect x="773.5" y="79.5" width="7.5" height="5.5" fill="#d4d7de" stroke="#8d929e" stroke-width=".8"/><path d="M773.5 82h7.5M776.5 79.5v5.5" fill="none" stroke="#8d929e" stroke-width="0.8" /><path d="M786.5 68V86" fill="none" stroke="#8a96b0" stroke-width="1" /><rect x="800.5" y="70" width="9" height="7" fill="#e8e8ec" /><path d="M800.5 72.3h9M800.5 74.6h9M803.5 70v7M806.5 70v7" fill="none" stroke="#8a8a92" stroke-width="0.8" /><rect x="804.5" y="71" width="1.3" height="5" fill="#1020e0" /><path d="M794.5 72h4v-2l3.5 3.2-3.5 3.2v-2h-4z" fill="#1020f0" /><rect x="795.0" y="76.5" width="9" height="8.5" fill="#111" /><rect x="796.0" y="77" width="7" height="1.5" fill="#d8c820" /><rect x="796.5" y="78.5" width="6" height="3" fill="#e8e8e8" /><rect x="797.5" y="82.5" width="4" height="2.5" fill="#ddd" /><rect x="800.0" y="83" width="1" height="1.7" fill="#111" /><rect x="822" y="70" width="9" height="7" fill="#e8e8ec" /><path d="M822 72.3h9M822 74.6h9M825 70v7M828 70v7" fill="none" stroke="#8a8a92" stroke-width="0.8" /><rect x="826" y="71" width="1.3" height="5" fill="#1020e0" /><path d="M824 72h-4v-2l-3.5 3.2 3.5 3.2v-2h4z" fill="#f01020" /><rect x="816.5" y="76.5" width="9" height="8.5" fill="#111" /><rect x="817.5" y="77" width="7" height="1.5" fill="#d8c820" /><rect x="818" y="78.5" width="6" height="3" fill="#e8e8e8" /><rect x="819" y="82.5" width="4" height="2.5" fill="#ddd" /><rect x="821.5" y="83" width="1" height="1.7" fill="#111" /><rect x="836" y="66" width="11" height="23" fill="#d9dfeb" /><path d="M839.5 82.0h5M839.5 84.0h5l-2.5 3z" fill="#fff" stroke="#fff" stroke-width="1" /><path d="M838.5 81.0h5" fill="none" stroke="#111" stroke-width="1" /><path d="M838.5 83.0h5l-2.5 3z" fill="#111" /></svg>
</div>
<div id="tabs">
<div class="abs" style="left:0;top:0;width:20px;height:23px;background:linear-gradient(#4f6186,#42547a);border-radius:0 4px 0 0"></div>
<div class="abs" style="left:5px;top:-1px;font-size:18px;color:#d9dee8;line-height:24px">×</div>
<div class="tab" style="left:26px;width:216px"><span style="left:23px">ProgPou [PRG] <i>[局部标签设置]</i></span></div>
<div class="tab" style="left:242px;width:187px;background:linear-gradient(#fffdf6 0,#fff3d4 50%,#ffe9a9 54%,#ffe8a6 100%);border-radius:3px 3px 0 0;color:#111"><span style="left:24px;word-spacing:0">ProgPou [PRG] [LD] 59步</span><span style="left:172px;top:-1px;font-size:18px;color:#6b5d3a;line-height:24px;letter-spacing:0">×</span></div>
<div class="tab" style="left:430px;width:160px"><span style="left:22px;word-spacing:2.5px">Global <i style="letter-spacing:.05px">[全局标签设置]</i></span></div>
<svg style="left:0px;top:0px" width="890" height="26" viewBox="0 0 890 26"><defs><linearGradient id="gd" x1="0" y1="0" x2="1" y2="1"><stop offset="0" stop-color="#cfe8ff"/><stop offset=".5" stop-color="#58b8f0"/><stop offset="1" stop-color="#d8e8f8"/></linearGradient><radialGradient id="gg" cx=".35" cy=".3" r=".8"><stop offset="0" stop-color="#60e060"/><stop offset=".45" stop-color="#18a038"/><stop offset=".6" stop-color="#1878e0"/><stop offset="1" stop-color="#0a3890"/></radialGradient></defs><path d="M30.5 4.5h9.5v14h-9.5z" fill="url(#gd)" stroke="#445" stroke-width="0.6" /><rect x="34" y="10" width="12" height="10" fill="#5858f8" /><rect x="35.5" y="11.5" width="2.5" height="1.8" fill="#e8e8ff" /><rect x="39.5" y="11.5" width="5.5" height="1.8" fill="#e8e8ff" /><rect x="35.5" y="14.5" width="2.5" height="1.8" fill="#e8e8ff" /><rect x="39.5" y="14.5" width="5.5" height="1.8" fill="#e8e8ff" /><rect x="35.5" y="17.5" width="2.5" height="1.8" fill="#e8e8ff" /><rect x="39.5" y="17.5" width="5.5" height="1.8" fill="#e8e8ff" /><path d="M248.5 4.5h9l4 4v11h-13z" fill="#fff" stroke="#222" stroke-width="1" /><path d="M257.5 4.5v4h4" fill="#ddd" stroke="#222" stroke-width="0.8" /><path d="M250 12.5h2.5M256.5 12.5h2.5" fill="none" stroke="#f01010" stroke-width="1.4" /><path d="M253 9v7M256 9v7" fill="none" stroke="#f01010" stroke-width="1.6" /><circle cx="439.5" cy="10.5" r="6.3" fill="url(#gg)"/><rect x="437" y="10" width="12" height="10" fill="#5858f8" /><rect x="438.5" y="11.5" width="2.5" height="1.8" fill="#e8e8ff" /><rect x="442.5" y="11.5" width="5.5" height="1.8" fill="#e8e8ff" /><rect x="438.5" y="14.5" width="2.5" height="1.8" fill="#e8e8ff" /><rect x="442.5" y="14.5" width="5.5" height="1.8" fill="#e8e8ff" /><rect x="438.5" y="17.5" width="2.5" height="1.8" fill="#e8e8ff" /><rect x="442.5" y="17.5" width="5.5" height="1.8" fill="#e8e8ff" /></svg>
</div>
<div id="main">
<div class="abs" style="left:0;top:0;width:18px;height:28px;background:linear-gradient(#bfc8da,#b4bed2);border-top:2px solid #76819a"></div>
<div class="abs" style="left:0;top:28px;width:18px;height:343px;background:#344668;border-top:1px solid #6d8fd0;border-right:1px solid #5b7fc0"></div>
<div class="abs" style="left:18px;top:0;width:2px;height:371px;background:#f4f6fa"></div>
<div class="abs" style="left:25px;top:0;width:865px;height:371px;background:#ffe8a6"></div>
<div class="abs" style="left:26px;top:3px;width:864px;height:368px;background:#9a9a9a"></div>
<div class="abs" style="left:27px;top:4px;width:863px;height:367px;background:#6a6a6a"></div>
<div class="abs" style="left:28px;top:5px;width:862px;height:366px;background:#969696"></div>
<div class="abs" style="left:29px;top:6px;width:861px;height:365px;background:#b8b8b8"></div>
<div class="abs" style="left:30px;top:7px;width:860px;height:364px;background:#fff"></div>
</div>
<div class="abs" style="left:30px;top:120px;width:98px;height:21px;background:#dfebfc"></div>
<div class="abs" style="left:128px;top:120px;width:762px;height:21px;background:linear-gradient(#eef4fd,#c3d9f8);border-bottom:1px solid #7da2e0"></div>
<div class="abs" style="left:33.5px;top:120px;font-size:13px;color:#000">写入</div>
<div class="hdr" style="left:128px;width:67px">1</div>
<div class="hdr" style="left:195px;width:67px">2</div>
<div class="hdr" style="left:262px;width:67px">3</div>
<div class="hdr" style="left:329px;width:67px">4</div>
<div class="hdr" style="left:396px;width:67px">5</div>
<div class="hdr" style="left:463px;width:67px">6</div>
<div class="hdr" style="left:530px;width:67px">7</div>
<div class="hdr" style="left:597px;width:67px">8</div>
<div class="hdr" style="left:664px;width:67px">9</div>
<div class="hdr" style="left:731px;width:67px">10</div>
<div class="hdr" style="left:798px;width:67px">11</div>
<div class="hdr" style="left:865px;width:67px">12</div>
<div class="abs" style="left:30px;top:141px;width:16px;height:15px;background:linear-gradient(#f6f9ff,#cfe0fa);border-right:1px solid #6f9ae0;border-bottom:1px solid #6f9ae0"></div>
<div class="abs" style="left:30px;top:156px;width:16px;height:200px;background:linear-gradient(#f9fbff,#dfebfc 50%,#c8dcfa);border-right:1px solid #6f9ae0;border-bottom:1px solid #6f9ae0"></div>
<div class="abs" style="left:30px;top:356px;width:16px;height:43px;background:linear-gradient(#fbfdff,#c9defb);border-right:1px solid #6f9ae0;border-bottom:1px solid #6f9ae0"></div>
<div class="abs" style="left:33px;top:140px;font-size:13px;line-height:15px;color:#000">1</div>
<div class="abs" style="left:33px;top:248px;font-size:13px;line-height:15px;color:#000">2</div>
<div class="abs" style="left:33px;top:369px;font-size:13px;line-height:15px;color:#000">3</div>
<svg style="left:0px;top:0px" width="890" height="484" viewBox="0 0 890 484"><path d="M87.5 141V398" stroke="#b4b4b4" stroke-width="1" stroke-dasharray="1 1" fill="none"/><path d="M194.5 141V398" stroke="#b4b4b4" stroke-width="1" stroke-dasharray="1 1" fill="none"/><path d="M261.5 141V398" stroke="#b4b4b4" stroke-width="1" stroke-dasharray="1 1" fill="none"/><path d="M328.5 141V398" stroke="#b4b4b4" stroke-width="1" stroke-dasharray="1 1" fill="none"/><path d="M395.5 141V398" stroke="#b4b4b4" stroke-width="1" stroke-dasharray="1 1" fill="none"/><path d="M462.5 141V398" stroke="#b4b4b4" stroke-width="1" stroke-dasharray="1 1" fill="none"/><path d="M529.5 141V398" stroke="#b4b4b4" stroke-width="1" stroke-dasharray="1 1" fill="none"/><path d="M596.5 141V398" stroke="#b4b4b4" stroke-width="1" stroke-dasharray="1 1" fill="none"/><path d="M663.5 141V398" stroke="#b4b4b4" stroke-width="1" stroke-dasharray="1 1" fill="none"/><path d="M730.5 141V398" stroke="#b4b4b4" stroke-width="1" stroke-dasharray="1 1" fill="none"/><path d="M797.5 141V398" stroke="#b4b4b4" stroke-width="1" stroke-dasharray="1 1" fill="none"/><path d="M864.5 141V398" stroke="#b4b4b4" stroke-width="1" stroke-dasharray="1 1" fill="none"/><path d="M46 155.5H890" stroke="#b4b4b4" stroke-width="1" stroke-dasharray="1 1" fill="none"/><path d="M46 355.5H890" stroke="#b4b4b4" stroke-width="1" stroke-dasharray="1 1" fill="none"/><path d="M46 398.5H890" stroke="#b4b4b4" stroke-width="1" stroke-dasharray="1 1" fill="none"/><path d="M194.5 120V141" stroke="#7da2e0" stroke-width="1"/><path d="M261.5 120V141" stroke="#7da2e0" stroke-width="1"/><path d="M328.5 120V141" stroke="#7da2e0" stroke-width="1"/><path d="M395.5 120V141" stroke="#7da2e0" stroke-width="1"/><path d="M462.5 120V141" stroke="#7da2e0" stroke-width="1"/><path d="M529.5 120V141" stroke="#7da2e0" stroke-width="1"/><path d="M596.5 120V141" stroke="#7da2e0" stroke-width="1"/><path d="M663.5 120V141" stroke="#7da2e0" stroke-width="1"/><path d="M730.5 120V141" stroke="#7da2e0" stroke-width="1"/><path d="M797.5 120V141" stroke="#7da2e0" stroke-width="1"/><path d="M864.5 120V141" stroke="#7da2e0" stroke-width="1"/><path d="M87.5 120V141" stroke="#f4f8fe" stroke-width="1" stroke-dasharray="1 1"/><path d="M116 129h6l-3 3z" fill="#5b7fb5"/></svg>
<div class="abs" style="left:87px;top:356px;width:41px;height:42px;background:#add8e6"></div>
<div class="abs" style="left:463px;top:356px;width:66px;height:42px;background:#add8e6;border:2px solid #00009a"></div>
<svg style="left:0px;top:0px" width="890" height="484" viewBox="0 0 890 484"><path d="M128.5 141V398" stroke="#000" stroke-width="1.2" fill="none"/><path d="M129 175.5H155.5M167.5 175.5H397M155.5 169V182M167.5 169V182" stroke="#000" stroke-width="1.2" fill="none"/><path d="M129 375.5H879" stroke="#000" stroke-width="1.2" fill="none"/><path d="M882 371h-2.5v8.5h2.5" stroke="#000" stroke-width="1.2" fill="none"/><path d="M466 388h7.5l-3 8h-4.5z" fill="#1e90e8"/><path d="M472 390l-2.5 6h1.5l2.5-6z" fill="#fff"/></svg>
<div class="abs" style="left:87px;width:40px;top:141px;font-size:12px;color:#222;text-align:right">(0)</div>
<div class="abs" style="left:87px;width:40px;top:249px;font-size:12px;color:#222;text-align:right">(0)</div>
<div class="abs" style="left:87px;width:40px;top:370px;font-size:12px;color:#222;text-align:right">(58)</div>
<div class="abs" style="left:128px;top:155px;width:67px;text-align:center;font-size:11.5px;color:#636363">SM400</div>
<div class="abs" style="left:883px;top:368px;font-size:12px;color:#111">E</div>
<div class="abs" style="left:396px;top:141px;width:494px;height:14px;background:#a2fdfd;border:1px solid #0a880a;border-right:0"></div>
<div class="abs" style="left:396px;top:156px;width:494px;height:2px;background:#fff"></div>
<div class="abs" style="left:398px;top:158px;width:492px;height:194px;background:#f0f0f0;border-left:1px solid #a0a0a0;border-top:1px solid #a0a0a0;border-bottom:1px solid #a0a0a0"></div>
<div class="abs" style="left:399px;top:159px;width:491px;height:176px;background:#fff"></div>
<div class="abs" style="left:400px;top:160px;width:21px;height:175px;background:#f0f0f0"></div>
<div class="abs" style="left:433px;top:159px;width:3px;height:68px;background:#f0d020"></div>
<div class="abs" style="left:432px;top:159px;width:0;height:176px;border-left:1px dotted #2a8a2a"></div>
<div class="abs" style="left:420px;top:163px;font-size:10px;line-height:13px;color:#007800;width:10px;text-align:right;font-family:'Liberation Mono',monospace">1</div>
<div class="abs" style="left:420px;top:180px;font-size:10px;line-height:13px;color:#007800;width:10px;text-align:right;font-family:'Liberation Mono',monospace">2</div>
<div class="abs" style="left:420px;top:197px;font-size:10px;line-height:13px;color:#007800;width:10px;text-align:right;font-family:'Liberation Mono',monospace">3</div>
<div class="abs" style="left:420px;top:214px;font-size:10px;line-height:13px;color:#007800;width:10px;text-align:right;font-family:'Liberation Mono',monospace">4</div>
<div class="code" style="left:447px;top:161px"><span style="color:#ff00ff;letter-spacing:2px;font-size:10px">字符串</span><span style="color:#ff00ff">1</span><span style="color:#222">:= 'AAAA';</span></div>
<div class="code" style="left:447px;top:178px"><span style="color:#ff00ff;letter-spacing:2px;font-size:10px">字符串</span><span style="color:#ff00ff">2</span><span style="color:#222">:= 'AAAA';</span></div>
<div class="code" style="left:447px;top:195px"><span style="color:#0000e0">IF </span><span style="color:#ff00ff;letter-spacing:2px;font-size:10px">字符串</span><span style="color:#ff00ff">1</span><span style="color:#222">='AAAA' </span><span style="color:#0000e0">THEN</span><span style="color:#222">;</span></div>
<div class="code" style="left:447px;top:212px"><span style="color:#0000e0">    END_IF</span><span style="color:#222">;</span></div>
<svg style="left:0px;top:0px" width="890" height="484" viewBox="0 0 890 484"><rect x="437.5" y="198.5" width="7" height="7" fill="#fff" stroke="#555" stroke-width="1"/><path d="M439 202h4" fill="none" stroke="#333" stroke-width="1" /><path d="M441.5 206v20.5h4.5" fill="none" stroke="#666" stroke-width="1" /><path d="M409 339.5v7l-4.5-3.5z" fill="#8a8a8a" /></svg>
</body></html>
